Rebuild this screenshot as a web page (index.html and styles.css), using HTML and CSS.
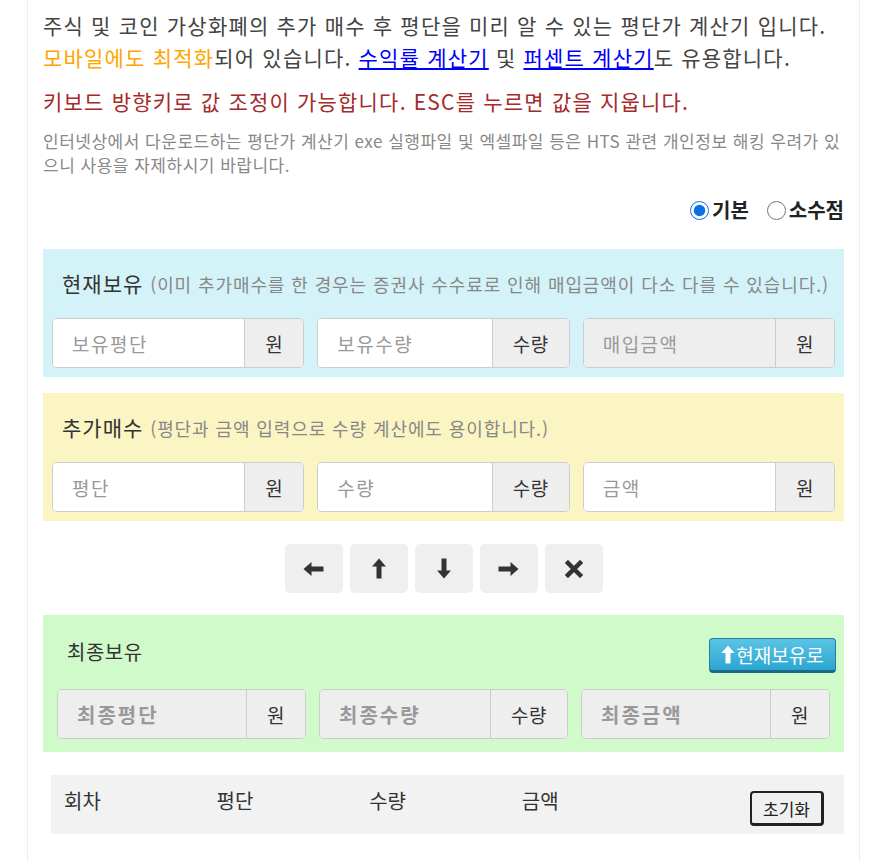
FILE: index.html
```html
<!DOCTYPE html>
<html lang="ko">
<head>
<meta charset="utf-8">
<title>평단가 계산기</title>
<link rel="stylesheet" href="styles.css">
</head>
<body>
<div class="wrap">
  <p class="intro">주식 및 코인 가상화폐의 추가 매수 후 평단을 미리 알 수 있는 평단가 계산기 입니다.<br><span class="orange">모바일에도 최적화</span>되어 있습니다. <a href="#">수익률 계산기</a> 및 <a href="#">퍼센트 계산기</a>도 유용합니다.</p>
  <p class="warn">키보드 방향키로 값 조정이 가능합니다. ESC를 누르면 값을 지웁니다.</p>
  <p class="note">인터넷상에서 다운로드하는 평단가 계산기 exe 실행파일 및 엑셀파일 등은 HTS 관련 개인정보 해킹 우려가 있으니 사용을 자제하시기 바랍니다.</p>
  <div class="mode">
    <label><input type="radio" name="mode" checked>기본</label>
    <label><input type="radio" name="mode">소수점</label>
  </div>

  <section class="panel blue">
    <div class="ptitle">현재보유 <small>(이미 추가매수를 한 경우는 증권사 수수료로 인해 매입금액이 다소 다를 수 있습니다.)</small></div>
    <div class="groups">
      <div class="ig"><input type="text" placeholder="보유평단"><span class="addon">원</span></div>
      <div class="ig"><input type="text" placeholder="보유수량"><span class="addon">수량</span></div>
      <div class="ig dis"><input type="text" placeholder="매입금액" disabled><span class="addon">원</span></div>
    </div>
  </section>

  <section class="panel yellow">
    <div class="ptitle">추가매수 <small>(평단과 금액 입력으로 수량 계산에도 용이합니다.)</small></div>
    <div class="groups">
      <div class="ig"><input type="text" placeholder="평단"><span class="addon">원</span></div>
      <div class="ig"><input type="text" placeholder="수량"><span class="addon">수량</span></div>
      <div class="ig"><input type="text" placeholder="금액"><span class="addon">원</span></div>
    </div>
  </section>

  <div class="keys">
    <button class="key" aria-label="left"><svg width="21" height="16" viewBox="0 0 21 16"><path d="M0.5 8 L8.5 1 L8.5 5.5 L20.5 5.5 L20.5 10.5 L8.5 10.5 L8.5 15 Z" fill="#333"/></svg></button>
    <button class="key" aria-label="up"><svg width="16" height="21" viewBox="0 0 16 21"><path d="M8 0.5 L15 8.5 L10.5 8.5 L10.5 20.5 L5.5 20.5 L5.5 8.5 L1 8.5 Z" fill="#333"/></svg></button>
    <button class="key" aria-label="down"><svg width="16" height="21" viewBox="0 0 16 21"><path d="M8 20.5 L15 12.5 L10.5 12.5 L10.5 0.5 L5.5 0.5 L5.5 12.5 L1 12.5 Z" fill="#333"/></svg></button>
    <button class="key" aria-label="right"><svg width="21" height="16" viewBox="0 0 21 16"><path d="M20.5 8 L12.5 1 L12.5 5.5 L0.5 5.5 L0.5 10.5 L12.5 10.5 L12.5 15 Z" fill="#333"/></svg></button>
    <button class="key" aria-label="clear"><svg width="18" height="18" viewBox="0 0 18 18"><path d="M3 3 L15 15 M15 3 L3 15" stroke="#333" stroke-width="4.5" stroke-linecap="square"/></svg></button>
  </div>

  <section class="panel green">
    <div class="ftitle">
      <span>최종보유</span>
      <button class="tocur"><svg width="14" height="19" viewBox="0 0 14 19"><path d="M7 0.5 L13.5 8 L9.5 8 L9.5 18.5 L4.5 18.5 L4.5 8 L0.5 8 Z" fill="#fff"/></svg>현재보유로</button>
    </div>
    <div class="groups">
      <div class="ig dis bold"><input type="text" placeholder="최종평단" disabled><span class="addon">원</span></div>
      <div class="ig dis bold"><input type="text" placeholder="최종수량" disabled><span class="addon">수량</span></div>
      <div class="ig dis bold"><input type="text" placeholder="최종금액" disabled><span class="addon">원</span></div>
    </div>
  </section>

  <div class="thead">
    <span class="col">회차</span>
    <span class="col">평단</span>
    <span class="col">수량</span>
    <span class="col">금액</span>
    <button class="reset">초기화</button>
  </div>
</div>
</body>
</html>
```

FILE: styles.css
```css
html, body {
  margin: 0;
  padding: 0;
  background: #fff;
}
body {
  font-family: "Noto Sans CJK KR", "Noto Sans", sans-serif;
  color: #444;
}
.wrap {
  margin: 0 32px 0 27px;
  border-left: 1px solid #eee;
  border-right: 1px solid #eee;
  padding: 0 15px 30px 15px;
  min-height: 862px;
  box-sizing: border-box;
}
p { margin: 0; }
.intro {
  padding-top: 9px;
  font-size: 21px;
  line-height: 32px;
  color: #444;
  letter-spacing: 1.2px;
  word-spacing: 0;
}
.orange { color: orange; }
.intro a { color: #00f; text-decoration: underline; }
.warn {
  margin-top: 12px;
  font-size: 21px;
  line-height: 32px;
  color: #a52a2a;
  letter-spacing: 1.2px;
  word-spacing: 0;
}
.note {
  margin-top: 12px;
  font-size: 17px;
  line-height: 24px;
  color: #888;
  letter-spacing: 0.5px;
}
.mode {
  display: flex;
  justify-content: flex-end;
  gap: 18px;
  margin-top: 20px;
  font-size: 20px;
  font-weight: bold;
  color: #222;
  line-height: 26px;
}
.mode label { display: flex; align-items: center; }
.mode input {
  margin: 0 3px 0 0;
  width: 19px;
  height: 19px;
  accent-color: #0b6fe8;
}
.panel {
  padding: 9px;
}
.blue { background: #d4f3f8; margin-top: 26px; }
.yellow { background: #faf5c3; margin-top: 16px; }
.green { background: #d0fac9; margin-top: 22px; padding: 23px 14px 13px 14px; }
.ptitle {
  height: 50px;
  line-height: 50px;
  padding-left: 10px;
  font-size: 21px;
  letter-spacing: 1px;
  color: #333;
  margin-bottom: 10px;
  white-space: nowrap;
}
.ptitle small {
  font-size: 18px;
  letter-spacing: 0.9px;
  color: #888;
}
.groups {
  display: grid;
  grid-template-columns: 1fr 1fr 1fr;
  column-gap: 13px;
}
.ig {
  display: flex;
  height: 50px;
  border: 1px solid #ccc;
  border-radius: 5px;
  box-sizing: border-box;
  overflow: hidden;
  background: #fff;
}
.ig input {
  flex: 1;
  min-width: 0;
  border: 0;
  outline: 0;
  padding: 0 0 0 19px;
  font-family: inherit;
  font-size: 19px;
  letter-spacing: 1.5px;
  background: #fff;
  color: #333;
}
.ig input::placeholder { color: #999; }
.ig.dis input { background: #eee; }
.ig.bold input { letter-spacing: 2px; }
.ig.bold input::placeholder { font-weight: bold; color: #999; font-size: 20px; }
.addon {
  min-width: 57px;
  padding: 0 20px;
  box-sizing: border-box;
  flex: none;
  border-left: 1px solid #ccc;
  background: #eee;
  display: flex;
  align-items: center;
  justify-content: center;
  font-size: 19px;
  letter-spacing: 0.5px;
  color: #333;
}
.keys {
  display: flex;
  justify-content: center;
  gap: 7px;
  margin-top: 23px;
}
.key {
  width: 58px;
  height: 49px;
  border: 0;
  border-radius: 5px;
  background: #efefef;
  display: flex;
  align-items: center;
  justify-content: center;
  padding: 0;
}
.ftitle {
  display: flex;
  justify-content: space-between;
  align-items: center;
  padding-left: 10px;
  margin-right: -6px;
  margin-bottom: 16px;
  font-size: 20px;
  letter-spacing: 0.5px;
  color: #333;
}
.ftitle span { position: relative; top: -4px; }
.tocur {
  height: 35px;
  width: 127px;
  border: 1px solid #1f7fa0;
  border-bottom: 3px solid #1b6a85;
  border-radius: 4px;
  background: linear-gradient(#5bc4e5, #2ba6d2);
  color: #fff;
  font-family: inherit;
  font-size: 19px;
  display: flex;
  align-items: center;
  justify-content: center;
  gap: 1px;
  padding: 0;
  box-sizing: border-box;
}
.thead {
  margin: 23px 0 0 8px;
  height: 59px;
  background: #f2f2f2;
  display: flex;
  align-items: center;
  padding: 0 20px 0 13px;
  font-size: 20px;
  color: #333;
}
.col {
  width: 152.6px;
  position: relative;
  top: -4px;
}
.reset {
  margin-left: auto;
  width: 74px;
  height: 35px;
  border: 2px solid #222;
  border-right-width: 3px;
  border-bottom-width: 3px;
  border-radius: 4px;
  background: #f0f0f0;
  font-family: inherit;
  font-size: 17px;
  color: #222;
  padding: 0;
  position: relative;
  top: 4px;
}
```
